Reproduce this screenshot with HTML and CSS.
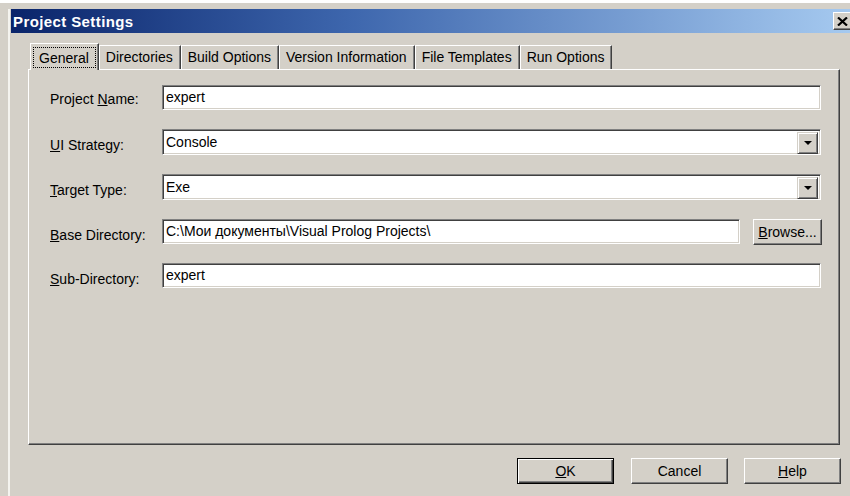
FILE: index.html
```html
<!DOCTYPE html>
<html lang="en">
<head>
<meta charset="utf-8">
<title>Project Settings</title>
<link rel="stylesheet" href="styles.css">
</head>
<body>
<div class="window">
  <div class="frame">
    <div class="titlebar">
      <span class="title">Project Settings</span>
      <button class="close" type="button" aria-label="Close">
        <svg width="11" height="9" viewBox="0 0 11 9"><path d="M1 0.5 L10 8.5 M10 0.5 L1 8.5" stroke="#000" stroke-width="2.2"/></svg>
      </button>
    </div>

    <div class="tabs">
      <div class="tab active"><span class="focus">General</span></div>
      <div class="tab">Directories</div>
      <div class="tab">Build Options</div>
      <div class="tab">Version Information</div>
      <div class="tab">File Templates</div>
      <div class="tab">Run Options</div>
    </div>

    <div class="panel">
      <div class="form">
        <div class="row first">
          <label class="label">Project <u>N</u>ame:</label>
          <div class="field">expert</div>
        </div>
        <div class="row combo-row">
          <label class="label"><u>U</u>I Strategy:</label>
          <div class="field combo">Console<span class="drop"><span class="arrow"></span></span></div>
        </div>
        <div class="row combo-row">
          <label class="label"><u>T</u>arget Type:</label>
          <div class="field combo">Exe<span class="drop"><span class="arrow"></span></span></div>
        </div>
        <div class="row">
          <label class="label"><u>B</u>ase Directory:</label>
          <div class="field path">C:\Мои документы\Visual Prolog Projects\</div>
          <button class="btn browse" type="button"><u>B</u>rowse...</button>
        </div>
        <div class="row">
          <label class="label"><u>S</u>ub-Directory:</label>
          <div class="field">expert</div>
        </div>
      </div>
    </div>

    <div class="actions">
      <button class="btn default" type="button"><u>O</u>K</button>
      <button class="btn" type="button">Cancel</button>
      <button class="btn" type="button"><u>H</u>elp</button>
    </div>
  </div>
</div>
</body>
</html>
```

FILE: styles.css
```css
html, body {
  margin: 0;
  padding: 0;
  background: #ffffff;
  overflow: hidden;
}

body {
  width: 850px;
  height: 496px;
  font-family: "Liberation Sans", Arial, sans-serif;
  font-size: 14px;
  color: #000;
}

/* dialog window frame */
.window {
  margin-top: 3px;
  width: 860px;
  height: 493px;
  box-sizing: border-box;
  padding: 6px 0 0 8px;
  background: #d4d0c8;
}

.frame {
  height: 100%;
  border-left: 2px solid #f4f3ef;
  padding-left: 1px;
}

/* caption */
.titlebar {
  width: 842px;
  height: 24px;
  display: flex;
  align-items: center;
  background: linear-gradient(to right, #0a246a 0%, #3d66ad 40%, #a6caf0 100%);
}

.title {
  padding-left: 2px;
  color: #fff;
  font-weight: bold;
  font-size: 15px;
  letter-spacing: 0.4px;
}

.close {
  margin-left: auto;
  margin-right: 1px;
  width: 19px;
  height: 18px;
  padding: 0;
  display: flex;
  align-items: center;
  justify-content: center;
  background: #d4d0c8;
  border: 1px solid;
  border-color: #fff #404040 #404040 #fff;
  box-shadow: inset -1px -1px #808080;
}

/* tab strip */
.tabs {
  display: flex;
  align-items: flex-end;
  height: 26px;
  margin: 10px 0 0 17px;
  padding-left: 2px;
  position: relative;
  z-index: 1;
}

.tab {
  height: 23px;
  line-height: 22px;
  padding: 0 7px 0 6px;
  border-top: 1px solid #fff;
  border-left: 1px solid #fff;
  border-right: 1px solid #404040;
  box-shadow: inset -1px 0 #808080;
  white-space: nowrap;
}

.tab.active {
  height: 27px;
  margin-bottom: -1px;
  padding: 3px 2px 0 2px;
  box-sizing: border-box;
  background: #d4d0c8;
}

.focus {
  display: block;
  height: 21px;
  line-height: 20px;
  box-sizing: border-box;
  padding: 0 6px 0 5px;
  border: 1px dotted #000;
}

/* tab page */
.panel {
  margin-left: 17px;
  width: 812px;
  height: 376px;
  box-sizing: border-box;
  border-top: 1px solid #fff;
  border-left: 1px solid #fff;
  border-right: 1px solid #404040;
  border-bottom: 1px solid #404040;
  box-shadow: inset -1px -1px #808080;
  padding: 15px 0 0 21px;
}

.form {
  display: flex;
  flex-direction: column;
  gap: 19px;
}

.row {
  display: flex;
  align-items: center;
  height: 25px;
}

.label {
  width: 112px;
  flex: none;
  white-space: nowrap;
  position: relative;
  top: 3px;
}

.row.first .label {
  top: 1px;
}

.field {
  width: 659px;
  height: 25px;
  box-sizing: border-box;
  background: #fff;
  border: 1px solid;
  border-color: #808080 #fff #fff #808080;
  box-shadow: inset 1px 1px #404040, inset -1px -1px #d4d0c8;
  padding: 0 0 0 3px;
  line-height: 22px;
  white-space: nowrap;
  position: relative;
}

.combo-row,
.combo {
  height: 26px;
}

.combo {
  line-height: 24px;
}

.drop {
  position: absolute;
  right: 2px;
  top: 2px;
  width: 21px;
  height: 22px;
  box-sizing: border-box;
  background: #d4d0c8;
  border: 1px solid;
  border-color: #d4d0c8 #404040 #404040 #d4d0c8;
  box-shadow: inset 1px 1px #fff, inset -1px -1px #808080;
  display: flex;
  align-items: center;
  justify-content: center;
}

.arrow {
  width: 0;
  height: 0;
  border-left: 4px solid transparent;
  border-right: 4px solid transparent;
  border-top: 4px solid #000;
}

.field.path {
  width: 578px;
}

/* push buttons */
.btn {
  font-family: inherit;
  font-size: 14px;
  color: #000;
  padding: 0;
  background: #d4d0c8;
  border: 1px solid;
  border-color: #fff #404040 #404040 #fff;
  box-shadow: inset -1px -1px #808080;
  height: 26px;
  line-height: 22px;
}

.browse {
  margin-left: 13px;
  width: 69px;
}

.actions {
  display: flex;
  justify-content: flex-end;
  gap: 16px;
  width: 813px;
  margin: 13px 0 0 17px;
}

.actions .btn {
  width: 97px;
}

.btn.default {
  border: 1px solid #000;
  box-shadow: inset 1px 1px #fff, inset -1px -1px #404040, inset -2px -2px #808080;
  margin-right: 1px;
}
```
